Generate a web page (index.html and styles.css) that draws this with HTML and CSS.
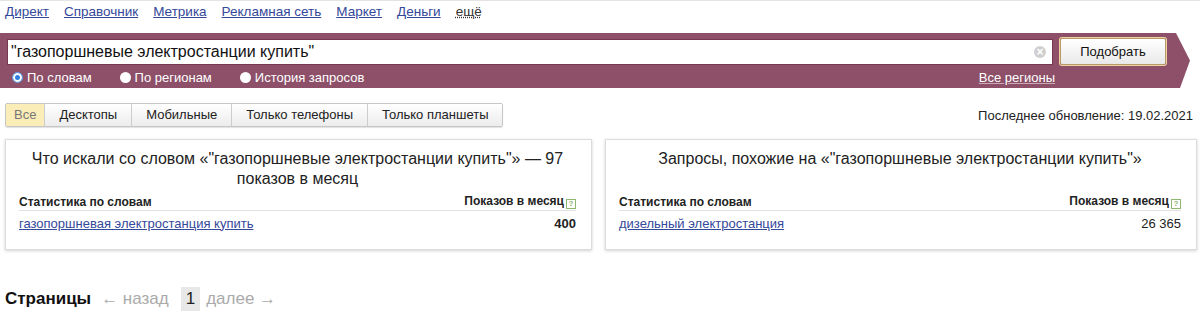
FILE: index.html
```html
<!DOCTYPE html>
<html lang="ru">
<head>
  <meta charset="UTF-8" />
  <title>Подбор слов</title>
  <link rel="stylesheet" href="styles.css">
</head>
<body>

  <div class="top-nav">
    <a href="#">Директ</a>
    <a href="#">Справочник</a>
    <a href="#">Метрика</a>
    <a href="#">Рекламная сеть</a>
    <a href="#">Маркет</a>
    <a href="#">Деньги</a>
    <a href="#" class="more">ещё</a>
  </div>

  <div class="search-bar">
    <div class="search-row">
      <div class="search-input">
        <span class="query">"газопоршневые электростанции купить"</span>
        <span class="clear">&times;</span>
      </div>
      <button class="search-button">Подобрать</button>
    </div>
    <div class="options-row">
      <label class="radio checked"><span class="dot"></span>По словам</label>
      <label class="radio"><span class="dot"></span>По регионам</label>
      <label class="radio"><span class="dot"></span>История запросов</label>
      <a href="#" class="regions">Все регионы</a>
    </div>
  </div>

  <div class="tabs-row">
    <div class="tabs">
      <span class="tab active">Все</span>
      <span class="tab">Десктопы</span>
      <span class="tab">Мобильные</span>
      <span class="tab">Только телефоны</span>
      <span class="tab">Только планшеты</span>
    </div>
    <div class="updated">Последнее обновление: 19.02.2021</div>
  </div>

  <div class="cards">
    <div class="card card-left">
      <div class="card-title">Что искали со словом «"газопоршневые электростанции купить"» — 97 показов в месяц</div>
      <div class="stat-head">
        <span>Статистика по словам</span>
        <span>Показов в месяц<span class="help">?</span></span>
      </div>
      <div class="stat-row">
        <a href="#">газопоршневая электростанция купить</a>
        <span class="count bold">400</span>
      </div>
    </div>
    <div class="card">
      <div class="card-title">Запросы, похожие на «"газопоршневые электростанции купить"»</div>
      <div class="stat-head">
        <span>Статистика по словам</span>
        <span>Показов в месяц<span class="help">?</span></span>
      </div>
      <div class="stat-row">
        <a href="#">дизельный электростанция</a>
        <span class="count">26 365</span>
      </div>
    </div>
  </div>

  <div class="pager">
    <b>Страницы</b>
    <span class="muted">← назад</span>
    <span class="current">1</span>
    <span class="muted">далее →</span>
  </div>

</body>
</html>
```

FILE: styles.css
```css
* { margin: 0; padding: 0; box-sizing: border-box; }
html, body {
  width: 100%;
  height: 100%;
  overflow: hidden;
  background: white;
  font-family: "Liberation Sans", Arial, sans-serif;
  color: #222;
}

a { color: #34489a; }

.top-nav {
  display: flex;
  gap: 15px;
  height: 33px;
  padding: 3px 5px 0;
  border-top: 1px solid #e4e4e4;
  font-size: 13.5px;
}
.top-nav .more { color: #333; text-decoration-style: dotted; }

.search-bar {
  height: 55px;
  margin-right: 10px;
  padding: 5px 0 0 7px;
  background: #8d5068;
  clip-path: polygon(0 0, calc(100% - 14px) 0, 100% 50%, calc(100% - 10px) 100%, 0 100%);
}

.search-row { display: flex; align-items: center; }

.search-input {
  width: 1046px;
  height: 26px;
  background: white;
  border: 1px solid #74384f;
  display: flex;
  align-items: center;
  justify-content: space-between;
  padding: 0 6px 0 3px;
  font-size: 16px;
  color: #111;
}

.clear {
  width: 12px;
  height: 12px;
  border-radius: 50%;
  background: #cfcfcf;
  color: white;
  font-size: 12px;
  line-height: 12px;
  text-align: center;
  font-weight: bold;
}

.search-button {
  margin-left: 7px;
  width: 106px;
  height: 27px;
  font-family: inherit;
  font-size: 13px;
  color: #111;
  border: 1px solid #b89a6a;
  border-radius: 2px;
  box-shadow: 0 0 0 1px #ecd3a0;
  background: linear-gradient(#ffffff, #e9e9e9);
}

.options-row {
  display: flex;
  align-items: center;
  height: 24px;
  padding-left: 5px;
  padding-right: 135px;
  font-size: 13px;
  color: white;
}

.radio { display: flex; align-items: center; gap: 4px; margin-right: 28px; }
.radio .dot {
  width: 11px;
  height: 11px;
  border-radius: 50%;
  background: white;
}
.radio.checked .dot {
  background: #2f7fe0;
  box-shadow: inset 0 0 0 2px white;
  border: 1px solid #6fa3e8;
}

.regions {
  margin-left: auto;
  color: white;
  text-decoration-color: #c9a9b6;
}

.tabs-row {
  display: flex;
  justify-content: space-between;
  align-items: center;
  margin-top: 15px;
  padding: 0 7px 0 5px;
}

.tabs {
  display: flex;
  border: 1px solid #c6c6c6;
  border-radius: 2px;
  box-shadow: 0 1px 1px rgba(0, 0, 0, 0.12);
}

.tab {
  height: 22px;
  line-height: 22px;
  padding: 0 14px;
  font-size: 13px;
  background: linear-gradient(#ffffff, #ececec);
  border-left: 1px solid #cdcdcd;
}
.tab:first-child { border-left: none; }
.tab.active {
  background: #fbedb8;
  color: #777;
  padding: 0 8px;
}

.updated { font-size: 13px; color: #222; }

.cards {
  display: flex;
  gap: 13px;
  margin-top: 12px;
  padding: 0 3px 0 5px;
}

.card {
  flex: 1;
  height: 111px;
  padding: 9px 15px 0 13px;
  border: 1px solid #dcdcdc;
  box-shadow: 0 1px 3px rgba(0, 0, 0, 0.18);
}
.card-left { flex: 0 0 587px; }

.card-title {
  height: 46px;
  padding: 0 10px;
  font-size: 16px;
  line-height: 20px;
  text-align: center;
  color: #222;
}

.stat-head {
  display: flex;
  justify-content: space-between;
  align-items: center;
  height: 16px;
  padding-bottom: 2px;
  border-bottom: 1px solid #e2e2e2;
  font-size: 12px;
  font-weight: bold;
  color: #222;
}

.help {
  display: inline-block;
  width: 10px;
  height: 10px;
  margin-left: 2px;
  border: 1px solid #8fb571;
  color: #8fb571;
  font-size: 8px;
  line-height: 8px;
  text-align: center;
  vertical-align: -1px;
}

.stat-row {
  display: flex;
  justify-content: space-between;
  align-items: center;
  height: 24px;
  font-size: 13px;
}
.count { font-size: 13px; color: #222; }
.bold { font-weight: bold; }

.pager {
  display: flex;
  align-items: center;
  gap: 10px;
  margin-top: 37px;
  padding-left: 5px;
  font-size: 17px;
}
.pager b { color: #111; }
.pager .muted { color: #aaa; }
.pager .current {
  background: #e8e8e8;
  color: #222;
  padding: 2px 5px;
  margin-left: 2px;
  margin-right: -4px;
}
```
